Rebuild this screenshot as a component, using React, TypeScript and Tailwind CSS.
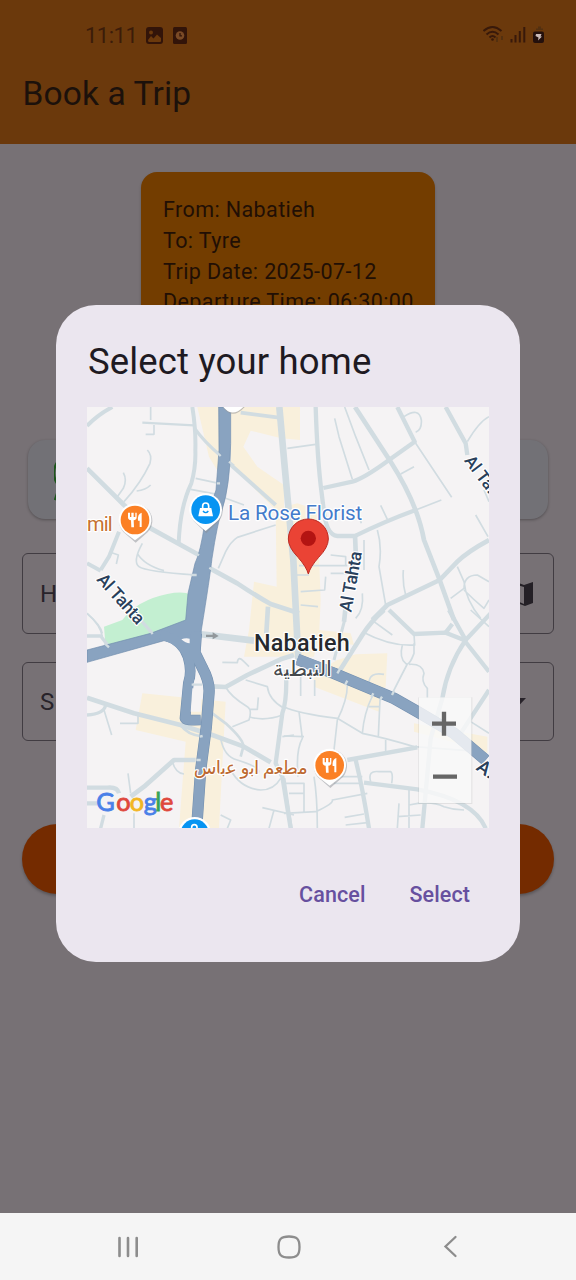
import React from "react";

const R = "font-[Roboto,sans-serif]";

function Fork({ x, y }: { x: number; y: number }) {
  return (
    <g transform={`translate(${x} ${y})`}>
      <path d="M0 64 L-30 38 A50 50 0 1 1 30 38 Z" fill="#8b9095" opacity=".5" transform="translate(2 4)" />
      <path d="M0 61 L-30 38 A49 49 0 1 1 30 38 Z" fill="#fff" />
      <circle r="43" fill="#fb8025" />
      <path d="M-21 -22 V-8 Q-21 0 -12 1 L-11 22 H-3 L-4 1 Q5 0 5 -8 V-22 H1 V-9 H-4 V-22 H-11 V-9 H-15 V-22 Z" fill="#fff" />
      <path d="M20 -22 Q7 -19 9 2 H14 V21 H20 Z" fill="#fff" />
    </g>
  );
}

function Minor({ d, w = 5 }: { d: string; w?: number }) {
  return <path d={d} strokeWidth={w} />;
}

function CityMap() {
  return (
    <svg viewBox="9 21 1206 1263" className="block h-[421px] w-[402px]" preserveAspectRatio="none">
      <rect x="9" y="21" width="1206" height="1263" fill="#f5f3f4" />
      {/* commercial areas */}
      <g fill="#f9f0dc">
        <path d="M340 21 H405 V220 L375 170 Z" />
        <path d="M440 21 H648 V120 L592 115 L500 92 L478 140 L520 200 L600 255 L600 320 L640 310 L700 330 L710 600 L706 690 L800 700 L810 735 L700 720 L690 770 L480 770 L495 690 L510 545 L578 560 L575 330 L440 195 Z" />
        <path d="M760 780 L815 763 L910 760 L905 860 L890 875 L885 935 L690 860 L690 820 Z" />
        <path d="M175 880 L425 905 L405 1284 H285 L305 1025 L155 990 Z" />
        <path d="M990 970 L1210 1010 V1060 L1160 1040 L990 995 Z" />
      </g>
      <path d="M115 660 Q160 600 250 582 Q300 572 320 585 L308 670 L220 700 L65 742 L60 680 Z" fill="#c3efd1" />
      <g fill="none" stroke="#d1dce1" strokeLinejoin="round">
        {/* northwest blocks */}
        <Minor w={12} d="M9 78 Q40 45 85 21" />
        <Minor w={12} d="M325 21 Q336 90 334 150 Q336 200 322 250 Q288 320 284 430" />
        <Minor w={7} d="M175 68 L330 76" />
        <Minor w={10} d="M332 85 Q360 125 410 167" />
        <Minor w={14} d="M9 205 L120 315 L200 385 L345 465" />
        <Minor w={12} d="M435 190 L575 315" />
        <Minor w={11} d="M470 38 L585 53" />
        <Minor w={20} d="M586 21 L602 200 L628 480 L643 780" />
        <Minor d="M200 21 V60 M210 75 V103 H185 M190 150 Q205 165 198 190 Q170 250 120 305 M200 255 Q185 270 158 273 M118 218 Q130 240 118 265 L100 290" />
        <Minor d="M335 235 L405 250 M320 268 L400 283 M425 295 L480 315 M575 375 L460 412 Q440 425 425 455 L403 505" />
        <Minor d="M175 430 Q145 485 165 500 Q185 515 335 525 M160 460 Q180 495 240 512 M75 455 L103 465 L97 492" />
        <Minor w={12} d="M105 395 L75 470 L50 510 M9 490 L50 512" />
        <Minor w={14} d="M378 505 L460 550 Q520 590 560 612 L645 640" />
        <Minor w={14} d="M552 620 L547 700" />
        <Minor d="M9 640 Q50 675 55 710" />
        {/* northeast blocks */}
        <g transform="translate(600 0)">
          <Minor w={13} d="M95 21 Q100 180 113 280 L118 320 Q125 405 160 408 H215" />
          <Minor w={14} d="M213 21 L320 185 Q400 310 420 420 L467 540 L510 660" />
          <Minor w={13} d="M340 21 L392 125 L315 180 Q240 235 205 245 L118 264" />
          <Minor w={13} d="M485 21 L545 130 L550 165" />
          <Minor w={12} d="M215 407 Q300 365 395 330" />
          <Minor w={14} d="M615 420 Q550 455 520 485 L467 540 L310 615 L265 660" />
          <Minor w={14} d="M213 405 L217 500 M185 620 L180 665" />
          <Minor d="M10 145 L95 133 M152 55 L165 110 L205 238 M182 21 L215 110 L255 210 M395 130 L503 292 M350 222 L390 200 M395 330 L472 300 M290 316 L310 358 M575 345 L612 410 M550 125 Q585 65 615 50" />
          <Minor d="M360 50 Q405 20 412 60 Q414 90 395 97 M600 270 L615 305 M232 370 L225 350" />
          <Minor d="M280 390 Q295 440 285 500 L305 615 M358 510 Q355 550 365 585 M520 500 L540 545 Q545 600 590 655 M500 595 L540 565 Q540 525 580 525 L615 545 M540 570 Q570 600 600 625 L615 600" />
          <Minor d="M140 465 L185 470 V498 M45 497 H190 M140 520 H190 M35 525 H75 M50 575 L122 570 L125 530 M50 615 L102 620 M240 510 V420 M235 580 Q240 630 215 655" />
        </g>
        {/* southwest blocks */}
        <g transform="translate(0 630)">
          <Minor w={20} d="M345 72 L510 92" />
          <Minor w={14} d="M385 229 L425 231 L490 195 L590 148 L630 135" />
          <Minor w={14} d="M9 263 L150 310 L290 345 L385 375 L480 410 L560 457" />
          <Minor w={14} d="M335 450 H270 L180 530 L140 560" />
          <Minor w={13} d="M9 533 H70 Q100 530 105 550 M9 580 H40" />
          <Minor w={10} d="M60 615 L50 655 M170 30 L205 70 M9 78 H50 L75 110 M9 315 Q60 312 65 285" />
          <Minor w={13} d="M606 180 Q610 270 595 310 L575 460 L595 500 L620 655" />
          <Minor w={8} d="M290 345 Q310 375 355 379 M385 310 L425 340 Q480 390 478 410 L470 440" />
          <Minor d="M9 10 Q50 45 55 70 M60 300 L83 375 M108 340 H162 V315 M265 455 Q275 490 300 492 M132 490 L140 550 M150 610 V655 M410 615 L440 630 L430 655" />
          <Minor d="M415 157 L460 158 Q462 135 480 155 L495 170 M485 210 L550 230 Q555 270 600 295 M425 231 Q440 260 490 290 Q505 300 495 330 L445 350 M495 320 Q540 335 595 315 M523 262 L520 298 H495 M595 380 L630 375" />
          <Minor d="M410 385 Q420 440 460 450 Q540 475 520 490 M440 480 Q470 535 530 540 Q570 540 590 505 M535 593 L630 615 M570 600 L555 655" />
        </g>
        {/* southeast blocks */}
        <g transform="translate(600 630)">
          <Minor w={14} d="M300 0 Q260 35 235 75 L165 185" />
          <Minor w={13} d="M315 0 L390 72 L485 68 L540 90 L615 185" />
          <Minor w={13} d="M495 0 L545 90 Q490 170 475 265 L440 385 L415 655" />
          <Minor w={13} d="M190 450 Q300 430 400 412 M240 518 L400 538 Q570 570 605 655 M215 450 Q235 530 255 655" />
          <Minor w={13} d="M615 240 L530 370 M620 10 L545 90 M485 68 L505 42" />
          <Minor w={9} d="M182 30 L150 150 M0 505 L22 655" />
          <Minor d="M235 65 Q320 110 392 105 L390 72 M270 35 L325 75 M355 105 Q345 145 365 160 Q375 170 390 130 V100 M370 162 Q340 220 325 250 M375 163 Q415 160 420 190 Q410 215 430 235 V265" />
          <Minor d="M50 195 V258 M92 210 V258 M190 225 Q190 270 160 330 L150 420 M265 258 Q240 310 235 370 M288 270 L283 378 M255 290 H285 M255 220 Q255 185 300 193" />
          <Minor d="M0 290 Q40 310 160 325 L235 370 Q310 385 390 410 L590 425 M305 390 V425 M45 305 L55 385 Q35 420 42 500 M0 378 L60 380 M150 490 V425" />
          <Minor d="M90 500 Q100 560 100 655 M0 520 H60 V605 M15 550 H60 M0 610 L95 605 Q150 580 145 570 L250 550 M182 622 L240 612 M185 645 L250 638 M260 515 Q250 480 285 485 H320 Q328 490 323 520 M345 580 L340 655 M340 620 L410 615 M375 540 V655 M375 585 Q440 570 480 590 Q510 600 540 600 M560 335 L615 370 M560 0 L615 50 M145 500 H235 M150 520 H230" />
        </g>
      </g>
      {/* trunk roads */}
      <g fill="none" stroke="#718eae" strokeLinejoin="round">
        <path d="M240 704 Q295 720 312 770 Q325 815 313 850 L303 955 Q304 962 350 960" strokeWidth="32" />
        <path d="M337 700 L333 758 L355 803 Q378 845 375 880 L367 980 L350 1110 L338 1284" strokeWidth="34" />
        <path d="M640 778 L750 820 L930 895 L1000 935 L1110 1000 L1205 1080" strokeWidth="35" />
      </g>
      <path d="M404 21 H440 V130 Q438 260 414 330 Q400 370 384 475 Q378 530 352 690 L348 735 L335 765 L300 770 Q285 728 240 722 L9 787 V750 L200 700 L305 660 L312 580 L333 490 Q350 455 362 370 L396 270 L405 150 Z" fill="#89a3c0" stroke="#718eae" strokeWidth="2" />
      <g fill="none" stroke="#89a3c0" strokeLinejoin="round">
        <path d="M230 704 Q295 720 312 770 Q325 815 313 850 L303 955 Q304 962 350 960" strokeWidth="29" />
        <path d="M337 695 L333 758 L355 803 Q378 845 375 880 L367 980 L350 1110 L338 1284" strokeWidth="31" />
        <path d="M640 778 L750 820 L930 895 L1000 935 L1110 1000 L1205 1080" strokeWidth="32" />
      </g>
      <path d="M292 718 Q305 713 317 716 V730 Q305 730 292 718 Z M337 825 L328 852 H354 Z M325 865 L354 870 L350 935 H320 Z" fill="#f5f3f4" />
      <g fill="none" stroke="#d1dce1" strokeWidth="7">
        <path d="M396 155 L410 168 M435 185 L450 197 M325 454 L345 466 M376 503 L392 513 M398 250 H408 M323 854 H355 M320 525 H338 M195 688 L206 702 M62 730 L75 742 M337 1080 H350 M347 1010 L356 1008" />
        <path d="M783 855 L790 842 M862 892 L868 880 M888 900 L894 890 M924 885 L930 873 M760 820 L772 800" />
      </g>
      <path d="M366 704 H386 V697 L404 708 L386 718 V711 H366 Z" fill="#92989c" />

      {/* labels */}
      <g className={R} fontWeight="500" stroke="#fff" strokeWidth="7" strokeLinejoin="round" style={{ paintOrder: "stroke" }}>
        <text x="9" y="392" fontSize="60" fontWeight="400" fill="#c5702f" textLength="77">mil</text>
        <text x="432" y="360" fontSize="62" fontWeight="400" fill="#437bcb" textLength="403">La Rose Florist</text>
        <text x="510" y="752" fontSize="70" fill="#26292d" textLength="287">Nabatieh</text>
        <text x="655" y="828" fontSize="64" fontWeight="400" fill="#45494d" textAnchor="middle" textLength="178" className="font-['Noto_Sans','DejaVu_Sans',sans-serif]">النبطية</text>
        <text x="500" y="1122" fontSize="56" fontWeight="400" fill="#bd6931" textAnchor="middle" textLength="342" className="font-['Noto_Sans','DejaVu_Sans',sans-serif]">مطعم ابو عباس</text>
        <g fill="#29405b" fontSize="53">
          <text transform="translate(36 540) rotate(48)" textLength="184">Al Tahta</text>
          <text transform="translate(802 638) rotate(-80)" textLength="184">Al Tahta</text>
          <text transform="translate(1139 182) rotate(53)" fontSize="51">Al Ta.</text>
          <text transform="translate(1174 1108) rotate(35)" fontSize="57">A.</text>
        </g>
      </g>
      <Fork x={153} y={360} />
      <Fork x={737} y={1096} />
      <g transform="translate(365 329)">
        <path d="M0 68 L-31 38 A49 49 0 1 1 31 38 Z" fill="#8b9095" opacity=".5" transform="translate(2 3)" />
        <path d="M0 64 L-31 38 A49 49 0 1 1 31 38 Z" fill="#fff" />
        <circle r="43" fill="#0794f2" />
        <path d="M-17 -5 H17 L22 20 H-22 Z" fill="#fff" />
        <path d="M-9 -5 V-11 A9 9 0 0 1 9 -11 V-5" fill="none" stroke="#fff" strokeWidth="5" />
        <path d="M-8 4 Q0 14 8 4" fill="none" stroke="#0794f2" strokeWidth="4" />
      </g>
      <path d="M416 21 Q445 62 482 21 Z" fill="#999" opacity=".6" />
      <path d="M418 21 Q445 54 478 21 Z" fill="#fff" />
      <circle cx="332" cy="1300" r="49" fill="#fff" />
      <circle cx="332" cy="1300" r="42" fill="#0794f2" />
      <path d="M323 1284 V1282 A8 8 0 0 1 339 1282 V1284" fill="none" stroke="#fff" strokeWidth="5" />

      {/* dropped pin */}
      <path d="M673 522 Q667 500 642 472 Q613 442 613 417 A60 60 0 1 1 733 417 Q733 442 704 472 Q679 500 673 522 Z" fill="#ea4335" stroke="#bd2b22" strokeWidth="3" />
      <circle cx="673" cy="415" r="23" fill="#b31412" />

      {/* zoom controls */}
      <rect x="1003" y="892" width="162" height="320" fill="#aaa" opacity=".25" />
      <rect x="1005" y="892" width="157" height="317" fill="#fff" opacity=".76" />
      <path d="M1044 971 H1116 M1080 935 V1007 M1047 1130 H1119" fill="none" stroke="#666" strokeWidth="13" />

      {/* attribution */}
      <text y="1234" fontSize="76" fontWeight="400" strokeWidth="2.5" className="font-[Lato,sans-serif]">
        <tspan x="37" fill="#4a80e8" stroke="#4a80e8">G</tspan><tspan x="97" fill="#df473c" stroke="#df473c">o</tspan><tspan x="137" fill="#f2b622" stroke="#f2b622">o</tspan><tspan x="179" fill="#4a80e8" stroke="#4a80e8">g</tspan><tspan x="214" fill="#38a357" stroke="#38a357">l</tspan><tspan x="228" fill="#df473c" stroke="#df473c">e</tspan>
      </text>
    </svg>
  );
}

function StatusBar() {
  return (
    <div className="flex h-[70px] items-center pl-[85px] pr-[31px] text-[#3b1c09]">
      <span className="w-[52px] pt-px text-[22px] leading-none tracking-[-0.5px]">11:11</span>
      <svg className="ml-[9px]" width="17" height="17" viewBox="0 0 17 17">
        <rect width="17" height="17" rx="3" fill="#321409" />
        <circle cx="5" cy="5.5" r="2" fill="#6b390c" />
        <path d="M2 13 L5 9 L7.5 11.5 L11 7.500 L15 11 V14 Q15 15 14 15 H3 Q2 15 2 13Z" fill="#6b390c" />
      </svg>
      <svg className="ml-[10px]" width="14" height="17" viewBox="0 0 14 17">
        <rect width="14" height="17" rx="1.500" fill="#321409" />
        <circle cx="7" cy="8.500" r="4.300" fill="#7a4a26" />
        <path d="M7 6 V8.800 H9" fill="none" stroke="#321409" strokeWidth="1.300" />
      </svg>
      <svg className="ml-auto" width="62" height="20" viewBox="0 0 62 20">
        <g fill="none" stroke="#38190a" strokeWidth="2">
          <path d="M.5 6 Q9.500 -2 18.500 6 M3.500 9.500 Q9.500 4 15.500 9.500 M6.500 12.500 Q9.500 9.500 12.500 12.500" />
          <path d="M28.500 17.500 V14 M32.500 17.500 V10 M36.800 17.500 V6 M41.300 17.500 V2" />
        </g>
        <circle cx="9.500" cy="14.500" r="1.300" fill="#38190a" />
        <path d="M14 17 V12 M19 11 V15" stroke="#54300f" strokeWidth="2" />
        <path d="M53 5 V3.500 H55 V1.500 H58 V3.500 H60 V5 Z" fill="#533010" />
        <rect x="50" y="6.500" width="11" height="11.500" rx="2" fill="#24100c" />
        <path d="M53 9 H58.500 L57.500 11.500 H59 L55 15.500 L55.500 12.500 L52.500 11 Z" fill="#cbbab6" />
      </svg>
    </div>
  );
}

export default function App() {
  return (
    <div className="relative flex h-[1280px] w-[576px] flex-col overflow-hidden bg-[#777175] font-[Roboto,sans-serif]">
      <header className="h-[144px] shrink-0 bg-[#6b390c]">
        <StatusBar />
        <h1 className="pl-[22.5px] pt-1 text-[33.5px] leading-[40px] tracking-[0.12px] text-[#1c110b]">Book a Trip</h1>
      </header>
      <main className="flex flex-1 flex-col px-[22px] pt-7">
        <section className="ml-[119px] h-[220px] w-[294px] rounded-[16px] bg-[#733d00] pl-[22px] pt-[23px] text-[21.5px] leading-[30.8px] tracking-[0.4px] whitespace-nowrap text-[#210f05] shadow-[0_2px_3px_rgba(0,0,0,0.2)]">
          <p>From: Nabatieh</p>
          <p>To: Tyre</p>
          <p>Trip Date: 2025-07-12</p>
          <p>Departure Time: 06:30:00</p>
        </section>
        <section className="mx-[6px] mt-[48px] flex h-[79px] items-center rounded-[17px] bg-[#727176] pl-[26px] shadow-[0_1px_3px_rgba(0,0,0,0.3)]">
          <svg width="40" height="42" viewBox="0 0 40 42" className="mt-[7px]">
            <path d="M3.500 0 A19 19 0 0 0 3.500 22 M1 38 L5 26" fill="none" stroke="#1d561c" strokeWidth="2.500" />
          </svg>
        </section>
        <div className="mt-[34px] flex h-[81px] items-center justify-between rounded-[6px] border-[1.5px] border-[#413c42] pl-[17px] pr-[19px] text-[24px] text-[#28232a]">
          <span>H</span>
          <svg width="26" height="26" viewBox="0 0 26 26">
            <path d="M1 3 L8 1 L16 4 L25 1 V22 L17 25 L9 22 L1 25 Z" fill="#242026" />
            <path d="M9 4 L16 6 V23 L9 20 Z" fill="#777175" />
          </svg>
        </div>
        <div className="mt-7 flex h-[79px] items-center justify-between rounded-[6px] border-[1.5px] border-[#413c42] pl-[17px] pr-[27px] text-[24px] text-[#28232a]">
          <span>S</span>
          <svg width="15" height="8" viewBox="0 0 15 8"><path d="M0 0 H15 L7.500 8 Z" fill="#28232a" /></svg>
        </div>
        <div className="mt-[83px] h-[70px] rounded-full bg-[#742b00] shadow-[0_2px_3px_rgba(0,0,0,0.25)]" />
      </main>
      <nav className="flex h-[67px] shrink-0 items-center bg-[#f5f5f5] pl-[117px] text-[#8d8d8d]">
        <svg width="22" height="22" viewBox="0 0 22 22" fill="none" stroke="currentColor" strokeWidth="2.600" strokeLinecap="round">
          <path d="M2.500 2 V20 M11 2 V20 M19.700 2 V20" />
        </svg>
        <svg className="ml-[138px]" width="24" height="24" viewBox="0 0 24 24" fill="none" stroke="currentColor" strokeWidth="2.300">
          <path d="M12 1.500 C20 1.500 22.500 4 22.500 12 S20 22.500 12 22.500 S1.500 20 1.500 12 S4 1.500 12 1.500Z" />
        </svg>
        <svg className="ml-[142px]" width="15" height="23" viewBox="0 0 15 23" fill="none" stroke="currentColor" strokeWidth="2.300" strokeLinecap="round">
          <path d="M12.500 2 L2.500 11.500 L12.500 21" />
        </svg>
      </nav>

      <div role="dialog" className="absolute left-[56px] top-[305px] flex h-[657px] w-[464px] flex-col rounded-[40px] bg-[#ebe6ef] pl-[31px] pr-[31px]">
        <h2 className="mt-[34px] h-[68px] pl-px text-[36.500px] leading-[46px] tracking-[0.15px] whitespace-nowrap text-[#1e1a22]">Select your home</h2>
        <CityMap />
        <div className="mt-[46px] flex justify-end gap-[44px] pr-[19px] text-[21.500px] leading-[41px] font-medium tracking-[0.1px] text-[#67509f]">
          <button>Cancel</button>
          <button>Select</button>
        </div>
      </div>
    </div>
  );
}
